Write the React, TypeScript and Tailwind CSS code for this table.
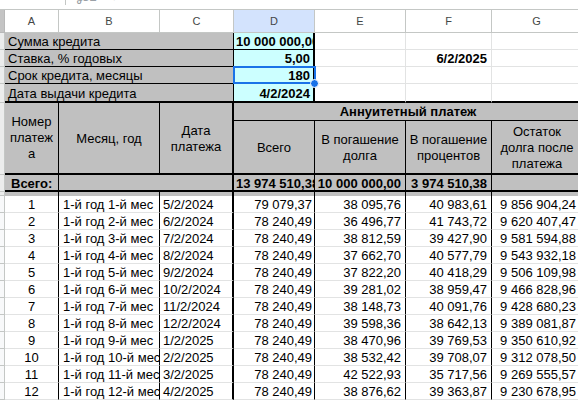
import { Fragment } from "react";

type Row = [string, string, string, string, string, string, string];

const params = [
	{ label: "Сумма кредита", value: "10 000 000,00", clip: true },
	{ label: "Ставка, % годовых", value: "5,00", clip: false },
	{ label: "Срок кредита, месяцы", value: "180", clip: false },
	{ label: "Дата выдачи кредита", value: "4/2/2024", clip: false },
];

const payments: Row[] = [
	["1", "1-й год 1-й мес", "5/2/2024", "79 079,37", "38 095,76", "40 983,61", "9 856 904,24"],
	["2", "1-й год 2-й мес", "6/2/2024", "78 240,49", "36 496,77", "41 743,72", "9 620 407,47"],
	["3", "1-й год 3-й мес", "7/2/2024", "78 240,49", "38 812,59", "39 427,90", "9 581 594,88"],
	["4", "1-й год 4-й мес", "8/2/2024", "78 240,49", "37 662,70", "40 577,79", "9 543 932,18"],
	["5", "1-й год 5-й мес", "9/2/2024", "78 240,49", "37 822,20", "40 418,29", "9 506 109,98"],
	["6", "1-й год 6-й мес", "10/2/2024", "78 240,49", "39 281,02", "38 959,47", "9 466 828,96"],
	["7", "1-й год 7-й мес", "11/2/2024", "78 240,49", "38 148,73", "40 091,76", "9 428 680,23"],
	["8", "1-й год 8-й мес", "12/2/2024", "78 240,49", "39 598,36", "38 642,13", "9 389 081,87"],
	["9", "1-й год 9-й мес", "1/2/2025", "78 240,49", "38 470,96", "39 769,53", "9 350 610,92"],
	["10", "1-й год 10-й мес", "2/2/2025", "78 240,49", "38 532,42", "39 708,07", "9 312 078,50"],
	["11", "1-й год 11-й мес", "3/2/2025", "78 240,49", "42 522,93", "35 717,56", "9 269 555,57"],
	["12", "1-й год 12-й мес", "4/2/2025", "78 240,49", "38 876,62", "39 363,87", "9 230 678,95"],
];

const columns = ["A", "B", "C", "D", "E", "F", "G"];

// left row-number strip, mostly cut off in the shot
const RowHead = ({ className = "" }: { className?: string }) => (
	<div
		className={`border-r border-b border-[#c4c7c5] bg-[#eceded] ${className}`}
	/>
);

const FormulaStrip = () => (
	<div className="flex h-[10px] items-start overflow-hidden border-b border-[#c4c7c5] bg-white">
		<div className="ml-[65px] h-[5px] w-px bg-[#c4c7c5]" />
		<span className="-mt-[11px] ml-[11px] text-[13px] text-[#9aa0a6]">ʝ32</span>
		<span className="-mt-[11px] ml-[14px] text-[13px] text-[#c4c7c5]">▾</span>
	</div>
);

export default function App() {
	return (
		<div className="h-[400px] w-[578px] overflow-hidden bg-white font-['Liberation_Sans',Arial,sans-serif] text-[13px] leading-[15px] text-black">
			<FormulaStrip />

			<div className="grid w-[582px] grid-cols-[5px_54px_101px_74px_81px_91px_86px_90px]">
				{/* column letters */}
				<div className="h-[23px] border-r border-b border-[#b8b8b8] bg-[#c4c4c4]" />
				{columns.map((letter) => (
					<div
						key={letter}
						className={`flex h-[23px] items-center justify-center border-r border-b border-[#c4c7c5] text-[11px] text-[#444746] ${
							letter === "D" ? "bg-[#d3e3fd]" : "bg-white"
						}`}>
						{letter}
					</div>
				))}

				{/* loan parameters */}
				{params.map((p, i) => {
					const last = i === params.length - 1;
					const h = last ? "h-[19px]" : "h-[17px]";
					const bottom = last
						? "border-b-2 border-b-black"
						: "border-b border-b-black";
					const bottomLight = last
						? "border-b-2 border-b-black"
						: "border-b border-b-[#e2e3e3]";
					return (
						<Fragment key={p.label}>
							<RowHead className={`${h} ${i === 2 ? "bg-[#d3e3fd]" : ""}`} />
							<div
								className={`col-span-3 flex items-center border-r border-r-black bg-[#c0c0c0] pt-px pl-[3px] ${h} ${bottom}`}>
								{p.label}
							</div>
							<div
								className={`relative flex items-center border-r-2 border-r-black bg-[#ccffff] pt-px font-bold whitespace-nowrap ${h} ${bottom} ${
									p.clip ? "justify-start overflow-hidden pl-[2px]" : "justify-end pr-[3px]"
								}`}>
								{p.value}
								{i === 2 && (
									<>
										<div className="absolute -top-px -left-px -right-[3px] -bottom-px border-2 border-[#1a73e8]" />
										<div className="absolute -right-[6px] -bottom-[5px] z-10 h-[9px] w-[9px] rounded-full border border-white bg-[#1a73e8]" />
									</>
								)}
							</div>
							<div className={`border-r border-r-[#e2e3e3] ${h} ${bottomLight}`} />
							<div
								className={`flex items-center justify-end border-r border-r-[#e2e3e3] pt-px pr-[4px] font-bold ${h} ${bottomLight}`}>
								{i === 1 ? "6/2/2025" : ""}
							</div>
							<div className={`border-r border-r-[#e2e3e3] ${h} ${bottomLight}`} />
						</Fragment>
					);
				})}

				{/* table head */}
				<RowHead className="row-span-2" />
				<div className="row-span-2 flex items-center justify-center border-r border-b-2 border-black bg-[#c0c0c0] text-center leading-[16px]">
					Номер
					<br />
					платеж
					<br />а
				</div>
				<div className="row-span-2 flex items-center justify-center border-r border-b-2 border-black bg-[#c0c0c0] pt-px">
					Месяц, год
				</div>
				<div className="row-span-2 flex items-center justify-center border-r-2 border-b-2 border-black bg-[#c0c0c0] pt-px text-center leading-[16px]">
					Дата
					<br />
					платежа
				</div>
				<div className="col-span-4 flex h-[18px] items-center justify-center border-b border-black bg-[#c0c0c0] font-bold">
					Аннуитетный платеж
				</div>
				<div className="flex h-[54px] items-center justify-center border-r border-b-2 border-black bg-[#c0c0c0] pt-px">
					Всего
				</div>
				<div className="flex h-[54px] items-center justify-center border-r border-b-2 border-black bg-[#c0c0c0] pt-px text-center leading-[16px]">
					В погашение
					<br />
					долга
				</div>
				<div className="flex h-[54px] items-center justify-center border-r border-b-2 border-black bg-[#c0c0c0] pt-px text-center leading-[16px]">
					В погашение
					<br />
					процентов
				</div>
				<div className="flex h-[54px] items-center justify-center border-b-2 border-black bg-[#c0c0c0] pt-px text-center leading-[16px]">
					Остаток
					<br />
					долга после
					<br />
					платежа
				</div>

				{/* totals */}
				<RowHead className="h-[17px]" />
				<div className="flex h-[17px] items-center border-r border-b-2 border-black bg-[#c0c0c0] pt-px pl-[6px] font-bold">
					Всего:
				</div>
				<div className="col-span-2 h-[17px] border-r-2 border-b-2 border-black bg-[#c0c0c0]" />
				<div className="flex h-[17px] items-center overflow-hidden border-r border-b-2 border-black bg-[#c0c0c0] pt-px pl-[2px] font-bold whitespace-nowrap">
					13 974 510,38
				</div>
				<div className="flex h-[17px] items-center justify-end border-r border-b-2 border-black bg-[#c0c0c0] pt-px pr-[4px] font-bold whitespace-nowrap">
					10 000 000,00
				</div>
				<div className="flex h-[17px] items-center justify-end border-r border-b-2 border-black bg-[#c0c0c0] pt-px pr-[4px] font-bold whitespace-nowrap">
					3 974 510,38
				</div>
				<div className="h-[17px] border-b-2 border-black bg-[#c0c0c0]" />

				{/* spacer row */}
				<RowHead className="h-[4px]" />
				<div className="h-[4px] border-r border-black bg-[#c0c0c0]" />
				<div className="h-[4px] border-r border-black bg-[#c0c0c0]" />
				<div className="h-[4px] border-r-2 border-black bg-[#c0c0c0]" />
				<div className="h-[4px] border-r border-black bg-[#c0c0c0]" />
				<div className="h-[4px] border-r border-black bg-[#c0c0c0]" />
				<div className="h-[4px] border-r border-black bg-[#c0c0c0]" />
				<div className="h-[4px] bg-[#c0c0c0]" />

				{/* payments */}
				{payments.map((r) => (
					<Fragment key={r[0]}>
						<RowHead className="h-[17px] bg-[#f8f9fa]" />
						<div className="flex h-[17px] items-center justify-center border-r border-b border-r-black border-b-[#e2e3e3] pt-px">
							{r[0]}
						</div>
						<div className="flex h-[17px] items-center overflow-hidden border-r border-b border-r-black border-b-[#e2e3e3] pt-px pl-[4px] whitespace-nowrap">
							{r[1]}
						</div>
						<div className="flex h-[17px] items-center border-r-2 border-b border-r-black border-b-[#e2e3e3] pt-px pl-[3px] whitespace-nowrap">
							{r[2]}
						</div>
						<div className="flex h-[17px] items-center justify-end border-r border-b border-r-black border-b-[#e2e3e3] pt-px pr-[2px] whitespace-nowrap">
							{r[3]}
						</div>
						<div className="flex h-[17px] items-center justify-end border-r border-b border-r-black border-b-[#e2e3e3] pt-px pr-[4px] whitespace-nowrap">
							{r[4]}
						</div>
						<div className="flex h-[17px] items-center justify-end border-r border-b border-r-black border-b-[#e2e3e3] pt-px pr-[4px] whitespace-nowrap">
							{r[5]}
						</div>
						<div className="flex h-[17px] items-center justify-end border-r border-b border-r-[#e2e3e3] border-b-[#e2e3e3] pt-px pr-[5px] whitespace-nowrap">
							{r[6]}
						</div>
					</Fragment>
				))}
			</div>
		</div>
	);
}
